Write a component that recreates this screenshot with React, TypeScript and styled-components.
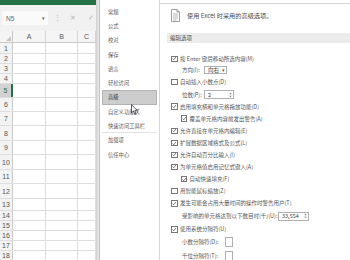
import React from "react";
import styled, { createGlobalStyle } from "styled-components";

const GlobalStyle = createGlobalStyle`
  html, body { margin: 0; padding: 0; background: #fff; }
  body {
    width: 350px; height: 260px; overflow: hidden;
    font-family: "Noto Sans CJK SC", "Noto Sans", sans-serif;
  }
  * { box-sizing: border-box; }
`;

const Screen = styled.div`
  position: relative;
  display: flex;
  width: 350px;
  height: 260px;
  overflow: hidden;
  background: #fff;
`;

/* ---------- spreadsheet ---------- */
const Sheet = styled.div`
  width: 96px;
  flex: none;
  display: flex;
  flex-direction: column;
  overflow: hidden;
`;

const TitleBar = styled.div`
  height: 5px;
  flex: none;
  background: #217346;
`;

const FormulaBar = styled.div`
  height: 26px;
  flex: none;
  display: flex;
  align-items: center;
  padding-left: 2px;
  background: #f1f1f1;
  font-family: "Liberation Sans", sans-serif;
  color: #777;
`;

const NameBox = styled.div`
  width: 46px;
  height: 14px;
  display: flex;
  align-items: center;
  justify-content: space-between;
  padding: 0 3px 0 4px;
  background: #fafafa;
  font-size: 6.5px;
  color: #666;
`;

const BarGlyph = styled.span<{ $gap: number }>`
  margin-left: ${(p) => p.$gap}px;
  font-size: 7px;
  color: #b5b5b5;
`;

const GridLine = styled.div<{ $h: number }>`
  height: ${(p) => p.$h}px;
  flex: none;
  display: grid;
  grid-template-columns: 13px 33px 32px 18px;
  border-bottom: 1px solid #dedede;
`;

const ColHeaderRow = styled(GridLine)`
  background: #f5f5f5;
  border-bottom: 1px solid #c9c9c9;
  font-family: "Liberation Sans", sans-serif;
  font-size: 7px;
  color: #555;
`;

const Corner = styled.div`
  position: relative;
  border-right: 1px solid #c9c9c9;
  &::after {
    content: "";
    position: absolute;
    right: 1px;
    bottom: 1px;
    border-left: 5px solid transparent;
    border-bottom: 5px solid #c4c4c4;
  }
`;

const ColHead = styled.div`
  display: flex;
  align-items: center;
  justify-content: center;
  border-right: 1px solid #d4d4d4;
`;

const RowHead = styled.div<{ $sel?: boolean }>`
  display: flex;
  align-items: center;
  justify-content: center;
  font-family: "Liberation Sans", sans-serif;
  font-size: 7px;
  background: ${(p) => (p.$sel ? "#d2d2d2" : "#f3f3f3")};
  color: ${(p) => (p.$sel ? "#217346" : "#555")};
  border-right: ${(p) => (p.$sel ? "2px solid #217346" : "1px solid #c9c9c9")};
`;

const Cell = styled.div`
  border-right: 1px solid #dedede;
`;

const Divider = styled.div`
  width: 4px;
  flex: none;
  background: linear-gradient(to right, #cfcfcf, #e9e9e9);
  border-right: 1px solid #c4c4c4;
`;

/* ---------- options nav ---------- */
const Nav = styled.nav`
  width: 60px;
  flex: none;
  padding: 4.5px 2px 0;
  border-right: 1px solid #d6d6d6;
  background: #fff;
`;

const NavItem = styled.div<{ $sel?: boolean; $sep?: boolean }>`
  height: 14.3px;
  display: flex;
  align-items: center;
  padding-left: 6px;
  font-size: 5.3px;
  color: ${(p) => (p.$sel ? "#333" : "#5a5a5a")};
  background: ${(p) => (p.$sel ? "#cdcdcd" : "transparent")};
  box-shadow: ${(p) => (p.$sel ? "inset 0 0 0 1px #b3b3b3" : "none")};
  border-bottom: ${(p) => (p.$sep ? "1px solid #e2e2e2" : "none")};
`;

/* ---------- options content ---------- */
const Content = styled.main`
  flex: 1;
  padding-top: 3px;
  display: flex;
  flex-direction: column;
  min-width: 0;
`;

const Frame = styled.div`
  flex: 1;
  border-top: 1px solid #d8d8d8;
  display: flex;
  flex-direction: column;
`;

const Intro = styled.div`
  height: 22px;
  flex: none;
  display: flex;
  align-items: center;
  gap: 7px;
  padding-left: 11px;
  font-size: 6.2px;
  color: #4a4a4a;
  white-space: nowrap;
`;

const SectionBar = styled.div`
  height: 10px;
  flex: none;
  margin: 7px 0 0 7px;
  padding-left: 3px;
  background: #ececec;
  font-size: 5.5px;
  line-height: 10px;
  color: #4a4a4a;
`;

const OptionList = styled.div`
  padding-top: 10.5px;
  display: flex;
  flex-direction: column;
`;

const OptRow = styled.div<{ $h: number; $indent: number }>`
  height: ${(p) => p.$h}px;
  flex: none;
  display: flex;
  align-items: center;
  padding-left: ${(p) => p.$indent}px;
  font-size: 5.5px;
  color: #555;
  white-space: nowrap;
`;

const Box = styled.span`
  width: 6.5px;
  height: 6.5px;
  flex: none;
  margin-right: 2.5px;
  border: 1px solid #777;
  background: #fff;
  display: flex;
  align-items: center;
  justify-content: center;
`;

const FieldLabel = styled.span<{ $w: number }>`
  width: ${(p) => p.$w}px;
  flex: none;
`;

const Field = styled.span<{ $w: number; $h: number }>`
  width: ${(p) => p.$w}px;
  height: ${(p) => p.$h}px;
  flex: none;
  display: flex;
  align-items: center;
  justify-content: space-between;
  padding: 0 1.5px 0 3px;
  border: 1px solid #b0b0b0;
  background: #fff;
  font-family: "Noto Sans CJK SC", "Liberation Sans", sans-serif;
  font-size: 5.5px;
  color: #444;
`;

const Caret = styled.span`
  font-size: 5px;
  color: #555;
`;

const CursorLayer = styled.div`
  position: absolute;
  left: 131px;
  top: 96px;
  width: 7px;
  height: 11px;
  pointer-events: none;
`;

/* ---------- drawings ---------- */
const Check = () => (
  <svg width="5" height="5" viewBox="0 0 10 10">
    <path d="M1.5 5.2 L4 7.8 L8.6 1.8" fill="none" stroke="#333" strokeWidth="1.4" />
  </svg>
);

const DocIcon = () => (
  <svg width="9" height="13" viewBox="0 0 9 13">
    <path d="M0.5 0.5 H6 L8.5 3 V12.5 H0.5 Z" fill="#fff" stroke="#888" strokeWidth="0.8" />
    <path d="M6 0.5 V3 H8.5" fill="none" stroke="#888" strokeWidth="0.8" />
    <path d="M2 5 H7 M2 7 H7 M2 9 H7 M2 11 H5.5" stroke="#999" strokeWidth="0.7" />
  </svg>
);

const SpinArrows = () => (
  <svg width="3" height="6" viewBox="0 0 6 12">
    <path d="M0.5 4.5 L3 1.5 L5.5 4.5 Z M0.5 7.5 L3 10.5 L5.5 7.5 Z" fill="#777" />
  </svg>
);

const Pointer = () => (
  <svg width="7" height="11" viewBox="0 0 7 11">
    <path d="M0.5 0.5 V8.8 L2.4 7 L3.8 10.3 L5 9.8 L3.7 6.6 L6.3 6.6 Z" fill="#fff" stroke="#222" strokeWidth="0.7" strokeLinejoin="round" />
  </svg>
);

/* ---------- data ---------- */
const rowHeights = [11, 10, 10, 10, 14, 14, 14, 15, 14, 15, 14, 15, 12, 10, 10, 10, 10, 10];

const navItems = [
  "常规", "公式", "校对", "保存", "语言", "轻松访问", "高级",
  "自定义功能区", "快速访问工具栏", "加载项", "信任中心",
];

type Opt =
  | { kind: "check"; text: string; on: boolean; level: 0 | 1; h: number }
  | { kind: "field"; label: string; lw: number; value: string; w: number; fh: number; control: "select" | "spin" | "blank"; h: number };

const options: Opt[] = [
  { kind: "check", text: "按 Enter 键后移动所选内容(M)", on: true, level: 0, h: 10.5 },
  { kind: "field", label: "方向(I):", lw: 22, value: "向右", w: 23, fh: 8, control: "select", h: 11.65 },
  { kind: "check", text: "自动插入小数点(D)", on: false, level: 0, h: 12.75 },
  { kind: "field", label: "位数(P):", lw: 22, value: "2", w: 30, fh: 9, control: "spin", h: 12.5 },
  { kind: "check", text: "启用填充柄和单元格拖放功能(D)", on: true, level: 0, h: 11.65 },
  { kind: "check", text: "覆盖单元格内容前发出警告(A)", on: true, level: 1, h: 12.2 },
  { kind: "check", text: "允许直接在单元格内编辑(E)", on: true, level: 0, h: 12.5 },
  { kind: "check", text: "扩展数据区域格式及公式(L)", on: true, level: 0, h: 11.65 },
  { kind: "check", text: "允许自动百分比输入(I)", on: true, level: 0, h: 12 },
  { kind: "check", text: "为单元格值启用记忆式键入(A)", on: true, level: 0, h: 12.15 },
  { kind: "check", text: "自动快速填充(F)", on: true, level: 1, h: 12.2 },
  { kind: "check", text: "用智能鼠标缩放(Z)", on: false, level: 0, h: 12 },
  { kind: "check", text: "发生可能会占用大量时间的操作时警告用户(T)", on: true, level: 0, h: 12.5 },
  { kind: "field", label: "受影响的单元格达到以下数目时(千)(U):", lw: 96, value: "33,554", w: 31, fh: 9, control: "spin", h: 13.35 },
  { kind: "check", text: "使用系统分隔符(U)", on: true, level: 0, h: 12.5 },
  { kind: "field", label: "小数分隔符(D):", lw: 43, value: "", w: 8, fh: 10, control: "blank", h: 13 },
  { kind: "field", label: "千位分隔符(T):", lw: 43, value: "", w: 8, fh: 10, control: "blank", h: 14 },
];

const OptionRow = ({ opt }: { opt: Opt }) => {
  if (opt.kind === "check") {
    return (
      <OptRow $h={opt.h} $indent={opt.level === 0 ? 11 : 20.5}>
        <Box>{opt.on && <Check />}</Box>
        {opt.text}
      </OptRow>
    );
  }
  return (
    <OptRow $h={opt.h} $indent={22}>
      <FieldLabel $w={opt.lw}>{opt.label}</FieldLabel>
      <Field $w={opt.w} $h={opt.fh}>
        {opt.value}
        {opt.control === "select" && <Caret>▾</Caret>}
        {opt.control === "spin" && <SpinArrows />}
      </Field>
    </OptRow>
  );
};

export default function App() {
  return (
    <>
      <GlobalStyle />
      <Screen>
        <Sheet>
          <TitleBar />
          <FormulaBar>
            <NameBox>
              N5 <Caret>▾</Caret>
            </NameBox>
            <BarGlyph $gap={6}>⋮</BarGlyph>
            <BarGlyph $gap={9}>✕</BarGlyph>
            <BarGlyph $gap={12}>✓</BarGlyph>
          </FormulaBar>
          <ColHeaderRow $h={12}>
            <Corner />
            <ColHead>A</ColHead>
            <ColHead>B</ColHead>
            <ColHead>C</ColHead>
          </ColHeaderRow>
          {rowHeights.map((h, i) => (
            <GridLine key={i} $h={h}>
              <RowHead $sel={i === 4}>{i + 1}</RowHead>
              <Cell />
              <Cell />
              <Cell />
            </GridLine>
          ))}
        </Sheet>
        <Divider />
        <Nav>
          {navItems.map((t, i) => (
            <NavItem key={t} $sel={t === "高级"} $sep={i === 8}>
              {t}
            </NavItem>
          ))}
        </Nav>
        <Content>
          <Frame>
            <Intro>
              <DocIcon />
              使用 Excel 时采用的高级选项。
            </Intro>
            <SectionBar>编辑选项</SectionBar>
            <OptionList>
              {options.map((o, i) => (
                <OptionRow key={i} opt={o} />
              ))}
            </OptionList>
          </Frame>
        </Content>
        <CursorLayer>
          <Pointer />
        </CursorLayer>
      </Screen>
    </>
  );
}
